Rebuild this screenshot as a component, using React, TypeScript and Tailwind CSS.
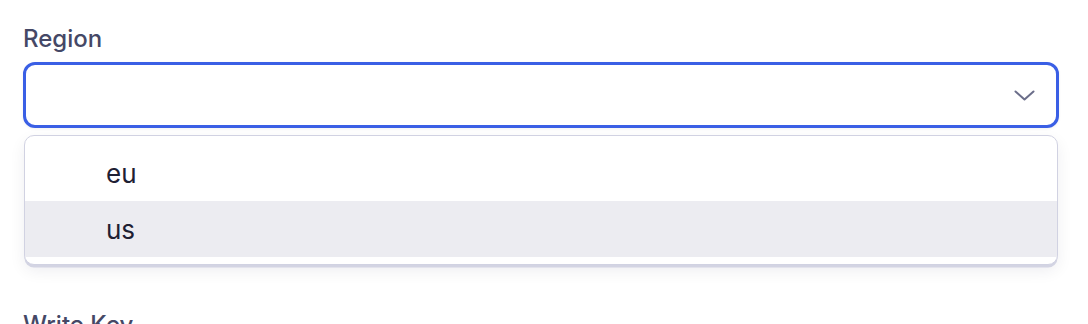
import { useState } from "react";

const regions = ["eu", "us"];

const Chevron = () => (
  <svg width="21" height="11" viewBox="0 0 21 11" fill="none">
    <path
      d="M1.5 1.5L10.5 9.5L19.5 1.5"
      stroke="#6b6e8a"
      strokeWidth="2"
      strokeLinecap="round"
      strokeLinejoin="round"
    />
  </svg>
);

const App = () => {
  const [hovered] = useState("us");

  return (
    <div
      className="w-[1088px] h-[324px] overflow-hidden bg-white pl-[23px] pr-[29px]"
      style={{ fontFamily: "Inter, 'Noto Sans', sans-serif" }}
    >
      <div className="pt-[23px]">
        <label className="block text-[24px] leading-[32px] font-medium text-[#454866] mb-[7px]">
          Region
        </label>
        <div className="relative">
          <button className="flex w-full h-[66px] items-center justify-end rounded-[12px] border-[3px] border-[#3a5fe5] bg-white pr-[21px] shadow-[0_1px_3px_rgba(0,0,0,0.06)]">
            <Chevron />
          </button>
          {/* open menu */}
          <div className="absolute left-px right-px top-[calc(100%+7px)] rounded-[10px] border-[1.5px] border-[#d1d2e2] bg-white pt-[9px] pb-[7px] shadow-[0_3px_0_-0.5px_#d3d4e3,0_6px_16px_rgba(20,20,60,0.07)]">
            {regions.map((r) => (
              <div
                key={r}
                className={`flex h-[56px] items-center pl-[81px] text-[26px] text-[#1e2033] ${
                  r == hovered ? "bg-[#ececf1]" : ""
                }`}
              >
                {r}
              </div>
            ))}
          </div>
        </div>
        <label className="block mt-[181px] text-[24px] leading-[32px] font-medium text-[#454866]">
          Write Key
        </label>
      </div>
    </div>
  );
};

export default App;
